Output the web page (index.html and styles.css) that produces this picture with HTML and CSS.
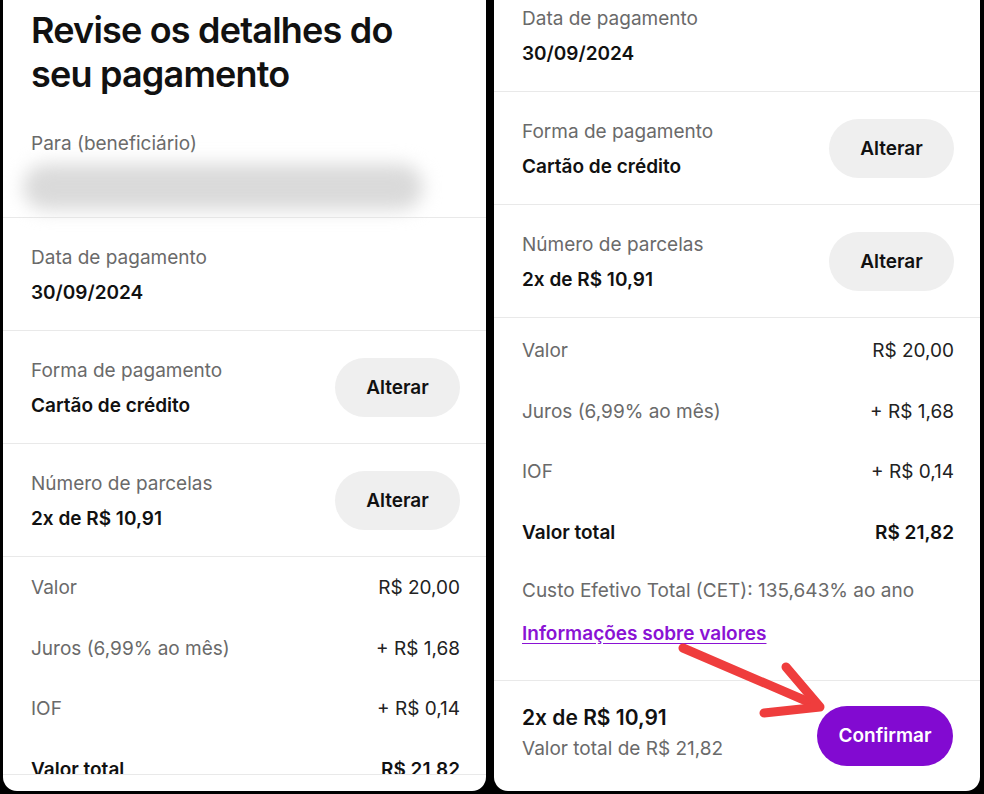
FILE: index.html
```html
<!doctype html>
<html lang="pt-BR">
<head>
    <meta charset="utf-8" />
    <title>Revise os detalhes do seu pagamento</title>
    <link rel="stylesheet" href="styles.css">
</head>
<body>
<div class="screens">
    <section class="phone">
        <div class="phone__scroll">
            <h1 class="title">Revise os detalhes do<br>seu pagamento</h1>
            <div class="payee">
                <div class="label">Para (beneficiário)</div>
                <div class="payee__hidden"><div class="payee__blur"></div></div>
            </div>
            <div class="item">
                <div class="item__text">
                    <div class="label">Data de pagamento</div>
                    <div class="value">30/09/2024</div>
                </div>
            </div>
            <div class="item">
                <div class="item__text">
                    <div class="label">Forma de pagamento</div>
                    <div class="value">Cartão de crédito</div>
                </div>
                <button class="btn-change">Alterar</button>
            </div>
            <div class="item">
                <div class="item__text">
                    <div class="label">Número de parcelas</div>
                    <div class="value">2x de R$ 10,91</div>
                </div>
                <button class="btn-change">Alterar</button>
            </div>
            <div class="amounts">
                <div class="amounts__row"><span class="label">Valor</span><span class="amount">R$ 20,00</span></div>
                <div class="amounts__row"><span class="label">Juros (6,99% ao mês)</span><span class="amount">+ R$ 1,68</span></div>
                <div class="amounts__row"><span class="label">IOF</span><span class="amount">+ R$ 0,14</span></div>
                <div class="amounts__row amounts__row--total"><span>Valor total</span><span>R$ 21,82</span></div>
            </div>
        </div>
        <div class="phone__foot"></div>
    </section>

    <section class="phone phone--right">
        <div class="phone__scroll">
            <div class="scrolled">
                <div class="item">
                    <div class="item__text">
                        <div class="label">Data de pagamento</div>
                        <div class="value">30/09/2024</div>
                    </div>
                </div>
                <div class="item">
                    <div class="item__text">
                        <div class="label">Forma de pagamento</div>
                        <div class="value">Cartão de crédito</div>
                    </div>
                    <button class="btn-change">Alterar</button>
                </div>
                <div class="item">
                    <div class="item__text">
                        <div class="label">Número de parcelas</div>
                        <div class="value">2x de R$ 10,91</div>
                    </div>
                    <button class="btn-change">Alterar</button>
                </div>
                <div class="amounts amounts--right">
                    <div class="amounts__row"><span class="label">Valor</span><span class="amount">R$ 20,00</span></div>
                    <div class="amounts__row"><span class="label">Juros (6,99% ao mês)</span><span class="amount">+ R$ 1,68</span></div>
                    <div class="amounts__row"><span class="label">IOF</span><span class="amount">+ R$ 0,14</span></div>
                    <div class="amounts__row amounts__row--total"><span>Valor total</span><span>R$ 21,82</span></div>
                </div>
                <div class="cet label">Custo Efetivo Total (CET): 135,643% ao ano</div>
                <a class="info-link" href="#">Informações sobre valores</a>
            </div>
        </div>
        <div class="summary">
            <div class="summary__text">
                <div class="summary__parcel">2x de R$ 10,91</div>
                <div class="label">Valor total de R$ 21,82</div>
            </div>
            <button class="btn-confirm">Confirmar</button>
        </div>
        <!-- seta vermelha desenhada por cima do print -->
        <svg class="arrow" width="486" height="791" viewBox="0 0 486 791">
            <g fill="none" stroke="#ef3d3d" stroke-width="9" stroke-linecap="round" stroke-linejoin="round">
                <path d="M189 648 L324 706" />
                <path d="M292 667 L326 707 L270 713" />
            </g>
        </svg>
    </section>
</div>
</body>
</html>
```

FILE: styles.css
```css
* {
    box-sizing: border-box;
}
body {
    margin: 0;
    background-color: #000;
    font-family: Inter, "Noto Sans", sans-serif;
    color: #111;
}
.screens {
    display: flex;
    gap: 8px;
    height: 794px;
    padding: 0 4px 3px 3px;
}
.phone {
    position: relative;
    display: flex;
    flex-direction: column;
    width: 483px;
    background-color: #fff;
    border-radius: 0 0 14px 14px;
    overflow: hidden;
}
.phone--right {
    width: 486px;
}
.phone__scroll {
    flex: 1;
    overflow: hidden;
    border-bottom: 1px solid #e9e9e9;
}
.phone__foot {
    height: 16px;
}
.title {
    margin: 0;
    padding: 8px 28px 0;
    font-size: 36px;
    line-height: 44px;
    font-weight: 600;
    letter-spacing: -0.8px;
}
.label {
    font-size: 19px;
    line-height: 24px;
    color: #6a6a6a;
}
.value {
    margin-top: 11px;
    font-size: 19px;
    line-height: 24px;
    font-weight: 600;
}
.payee {
    margin-top: 36px;
    padding: 0 28px;
}
.payee__hidden {
    height: 61px;
    padding-top: 8px;
}
.payee__blur {
    width: 400px;
    height: 46px;
    margin-left: -8px;
    background-color: #dadada;
    border-radius: 24px;
    filter: blur(9px);
}
.item {
    display: flex;
    align-items: center;
    justify-content: space-between;
    height: 113px;
    padding: 0 26px 0 28px;
    border-top: 1px solid #e9e9e9;
}
.item__text {
    padding-top: 2px;
}
.btn-change {
    width: 125px;
    height: 59px;
    border: none;
    border-radius: 30px;
    background-color: #efefef;
    font-family: inherit;
    font-size: 19px;
    font-weight: 600;
    color: #111;
}
.amounts {
    padding: 1px 26px 0 28px;
    border-top: 1px solid #e9e9e9;
}
.amounts--right {
    padding-top: 3px;
}
.amounts__row {
    display: flex;
    justify-content: space-between;
    align-items: center;
    height: 60.5px;
    font-size: 19px;
    line-height: 24px;
}
.amount {
    color: #222;
}
.amounts__row--total {
    font-weight: 600;
    color: #111;
}
.scrolled {
    margin-top: -22px;
}
.cet {
    margin-top: 16px;
    padding: 0 28px;
}
.info-link {
    display: inline-block;
    margin: 19px 0 0 28px;
    font-size: 19px;
    line-height: 24px;
    font-weight: 600;
    color: #8a12d4;
    text-decoration: underline;
    text-underline-offset: 3px;
}
.summary {
    display: flex;
    align-items: center;
    justify-content: space-between;
    height: 110px;
    padding: 0 27px 7px 28px;
}
.summary__parcel {
    font-size: 21px;
    line-height: 28px;
    font-weight: 600;
    margin-bottom: 5px;
}
.btn-confirm {
    width: 136px;
    height: 60px;
    margin-top: 6px;
    border: none;
    border-radius: 30px;
    background-color: #820ad1;
    font-family: inherit;
    font-size: 19px;
    font-weight: 600;
    color: #fff;
}
.arrow {
    position: absolute;
    top: 0;
    left: 0;
    pointer-events: none;
}
```
